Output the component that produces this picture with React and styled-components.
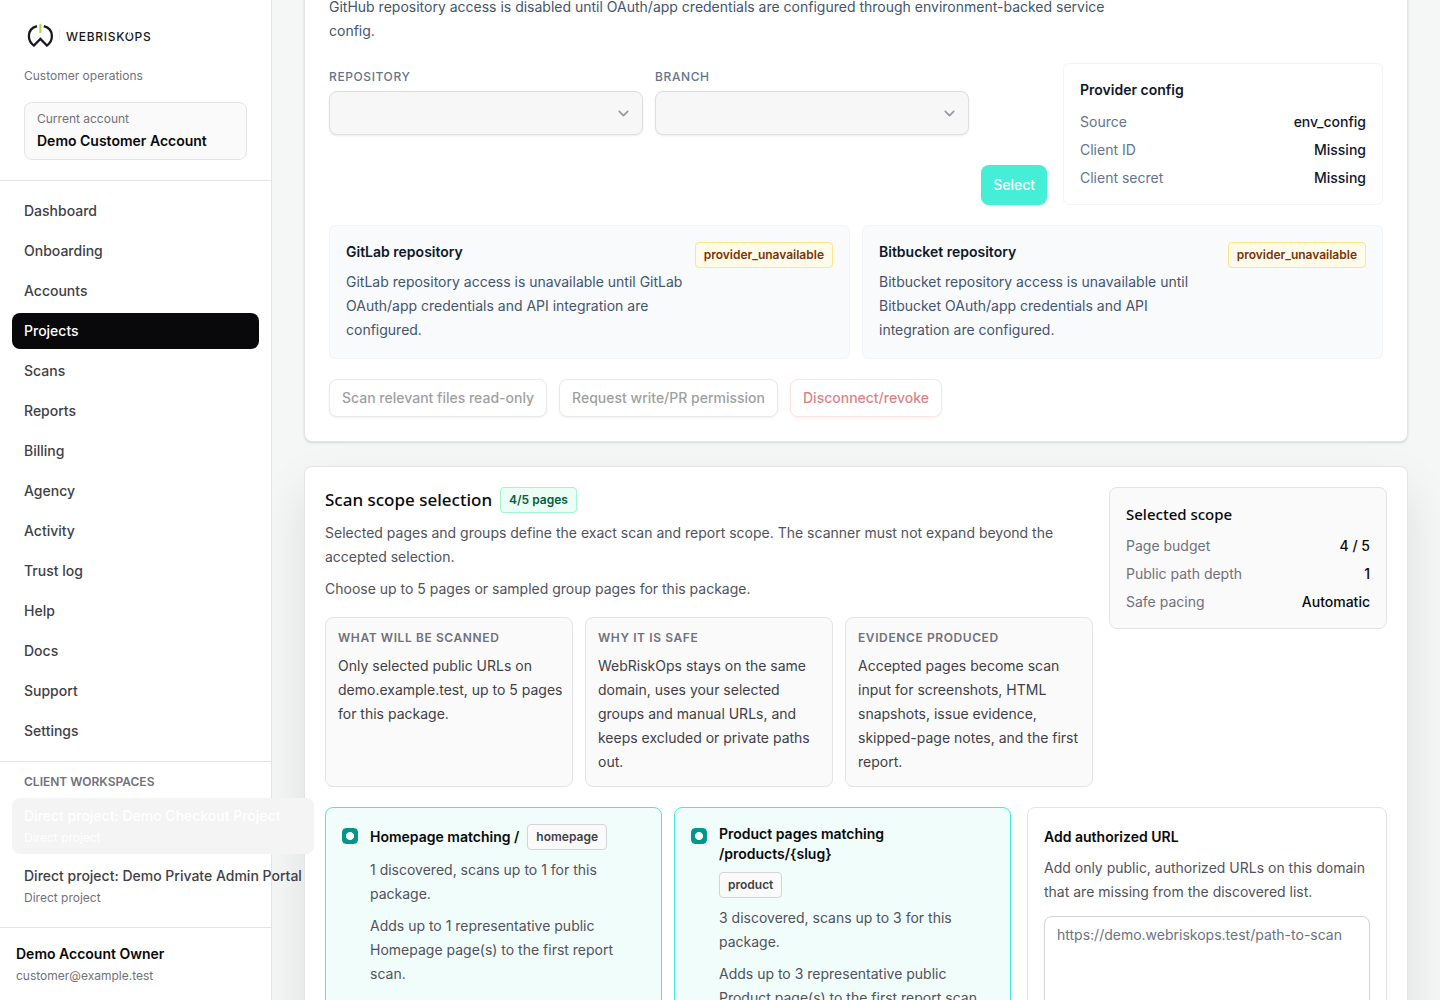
import React, { useState } from "react";
import styled, { createGlobalStyle, css } from "styled-components";

const GlobalStyle = createGlobalStyle`
  *,
  *::before,
  *::after {
    box-sizing: border-box;
  }

  body {
    margin: 0;
    background: #f5f7f7;
    color: #09090b;
    font-family: Inter, "Liberation Sans", sans-serif;
    font-size: 14px;
    line-height: 20px;
  }

  h2,
  h3,
  p,
  dl,
  dd {
    margin: 0;
  }

  button,
  input,
  select,
  textarea {
    font: inherit;
  }
`;

const Shell = styled.div`
  display: flex;
  height: 100vh;
  overflow: hidden;
`;

/* sidebar */

const Sidebar = styled.aside`
  position: relative;
  z-index: 1;
  flex: none;
  width: 272px;

  display: flex;
  flex-direction: column;

  background: white;
  border-right: 1px solid #e4e4e7;
`;

const Brand = styled.div`
  padding: 20px 24px;
  border-bottom: 1px solid #e4e4e7;
`;

const Logo = styled.svg`
  display: block;
  width: 128px;
  height: 32px;
`;

const Muted = styled.p`
  color: #71717b;
  font-size: 12px;
  line-height: 16px;
`;

const Tagline = styled(Muted)`
  margin-top: 16px;
`;

const Account = styled.div`
  margin-top: 18px;
  padding: 8px 12px;

  border: 1px solid #e4e4e7;
  border-radius: 8px;
  background: #fafafa;
`;

const Strong = styled.p`
  font-weight: 600;
`;

const AccountName = styled(Strong)`
  margin-top: 4px;
`;

const Nav = styled.nav`
  flex: 1;
  min-height: 0;

  display: flex;
  flex-direction: column;
`;

const NavList = styled.div`
  display: grid;
  gap: 4px;
  padding: 12px;
`;

const NavLink = styled.a`
  padding: 8px 12px;
  border-radius: 8px;
  color: ${({ $active }) => ($active ? "white" : "#3f3f46")};
  background: ${({ $active }) => ($active ? "#09090b" : "transparent")};
  font-weight: 500;
  text-decoration: none;
`;

const Workspaces = styled.div`
  padding: 12px;
  border-top: 1px solid #e4e4e7;
`;

const WorkspacesTitle = styled.h2`
  padding: 0 12px;
  margin-bottom: 8px;

  color: #71717b;
  font-size: 12px;
  font-weight: 600;
  line-height: 16px;
  text-transform: uppercase;
`;

const WorkspaceList = styled.div`
  display: grid;
  gap: 4px;
  width: max-content;
  min-width: 100%;
`;

const Workspace = styled.a`
  display: grid;
  gap: 4px;
  padding: 8px 12px;
  border-radius: 8px;

  color: #3f3f46;
  font-weight: 500;
  text-decoration: none;
  white-space: nowrap;

  && > small {
    color: #71717b;
    font-size: 12px;
    font-weight: 400;
    line-height: 16px;
  }

  ${({ $active }) =>
    $active &&
    css`
      background: #f4f4f4;

      &&,
      && > small {
        color: white;
      }
    `}
`;

const Owner = styled.div`
  display: grid;
  gap: 4px;
  padding: 16px;
  border-top: 1px solid #e4e4e7;
`;

/* content */

const Main = styled.main`
  flex: 1;
  min-width: 0;
  overflow: hidden;
`;

const Content = styled.div`
  display: grid;
  gap: 24px;
  padding: 0 32px 32px;
  margin-top: -30px;
`;

const Card = styled.section`
  padding: ${({ $raised }) => ($raised ? "20px" : "24px")};
  background: white;
  border: 1px solid #e4e4e7;
  border-radius: 8px;
  box-shadow: ${({ $raised }) =>
    $raised
      ? "0 24px 50px rgba(9, 9, 11, 0.1)"
      : "0 1px 3px rgba(0, 0, 0, 0.1), 0 1px 2px -1px rgba(0, 0, 0, 0.1)"};
`;

const Text = styled.p`
  color: ${({ $tone }) =>
    ({ slate: "#45556c", dark: "#3f3f46" })[$tone] || "#52525c"};
  line-height: 24px;
`;

const Intro = styled(Text)`
  max-width: 784px;
`;

const Split = styled.div`
  display: grid;
  grid-template-columns: minmax(0, 1fr) ${({ $side }) => $side}px;
  gap: 16px;
  margin-top: ${({ $top }) => $top || 0}px;
`;

const RepoForm = styled.form`
  display: grid;
  grid-template-columns: 1fr 1fr auto;
  gap: 12px;
`;

const Field = styled.label`
  color: #62748e;
  font-size: 12px;
  font-weight: 500;
  line-height: 28px;
  letter-spacing: 0.6px;
  text-transform: uppercase;
`;

const Select = styled.select`
  display: block;
  width: 100%;
  height: 44px;
  padding: 0 40px 0 12px;

  appearance: none;
  opacity: 1;
  color: #3f3f46;
  border: 1px solid #dedee0;
  border-radius: 8px;
  background: #f7f7f7
    url("data:image/svg+xml,%3Csvg xmlns='http://www.w3.org/2000/svg' viewBox='0 0 20 20' fill='none'%3E%3Cpath stroke='%23959ba7' stroke-linecap='round' stroke-linejoin='round' stroke-width='1.7' d='M6 8l4 4 4-4'/%3E%3C/svg%3E")
    no-repeat right 8px center / 21px 21px;
  box-shadow: 0 1px 2px rgba(0, 0, 0, 0.08);
`;

const SelectButton = styled.button`
  align-self: end;
  height: 40px;
  padding: 0 12px;

  color: white;
  background: #45efd7;
  border: 0;
  border-radius: 8px;
  box-shadow: 0 1px 2px rgba(0, 0, 0, 0.08);
  font-weight: 500;
`;

const Summary = styled.aside`
  align-self: start;
  padding: 16px;
  border: 1px solid ${({ $filled }) => ($filled ? "#e4e4e7" : "#f3f4f6")};
  border-radius: ${({ $filled }) => ($filled ? "8px" : "6px")};
  background: ${({ $filled }) => ($filled ? "#fafafa" : "white")};
  color: ${({ $filled }) => ($filled ? "#09090b" : "#0f172b")};

  dl {
    display: grid;
    gap: 8px;
    margin-top: 12px;
  }

  dl > div {
    display: flex;
    justify-content: space-between;
  }

  dt {
    color: ${({ $filled }) => ($filled ? "#71717b" : "#62748e")};
  }

  dd {
    font-weight: 500;
  }
`;

const Subtitle = styled.h3`
  font-size: 14px;
  font-weight: 600;
  line-height: 20px;
`;

const Title = styled.h2`
  font-family: "Noto Sans", sans-serif;
  font-size: 17px;
  font-weight: 500;
  line-height: 26px;
`;

const ScopeTitle = styled.h3`
  font-family: "Noto Sans", sans-serif;
  font-size: 15px;
  font-weight: 500;
  line-height: 20px;
`;

const Providers = styled.div`
  display: grid;
  grid-template-columns: 1fr 1fr;
  gap: 12px;
  margin-top: 20px;
`;

const Provider = styled.article`
  display: flex;
  justify-content: space-between;
  align-items: flex-start;
  gap: 12px;
  padding: 16px;

  color: #0f172b;
  background: #f8fafc;
  border: 1px solid #f1f5f9;
  border-radius: 6px;

  p {
    margin-top: 8px;
  }
`;

const badgeTones = {
  amber: ["#7b3306", "#fffbeb", "#fee685"],
  green: ["#006045", "#ecfdf5", "#a4f4cf"],
  gray: ["#3f3f46", "#fafafa", "#d4d4d8"],
};

const Badge = styled.span`
  flex: none;
  padding: 4px 8px;

  color: ${({ $tone }) => badgeTones[$tone][0]};
  background: ${({ $tone }) => badgeTones[$tone][1]};
  border: 1px solid ${({ $tone }) => badgeTones[$tone][2]};
  border-radius: 4px;
  font-size: 12px;
  font-weight: 600;
  line-height: 16px;
`;

const Actions = styled.div`
  display: flex;
  flex-wrap: wrap;
  gap: 12px;
  margin-top: 20px;
`;

const ActionButton = styled.button`
  height: 38px;
  padding: 0 12px;

  color: ${({ $danger }) => ($danger ? "#c10007" : "#3f3f46")};
  background: white;
  border: 1px solid ${({ $danger }) => ($danger ? "#ffc9c9" : "#d4d4d8")};
  border-radius: 8px;
  box-shadow: 0 1px 2px rgba(0, 0, 0, 0.1);
  font-weight: 500;
  opacity: 0.5;
`;

const TitleRow = styled.div`
  display: flex;
  flex-wrap: wrap;
  align-items: center;
  gap: 8px;
`;

const ScopeIntro = styled.div`
  display: grid;
  gap: 8px;
`;

const Facts = styled.div`
  display: grid;
  grid-template-columns: repeat(3, minmax(0, 1fr));
  gap: 12px;
  margin-top: 8px;
`;

const Fact = styled.div`
  padding: 12px 8px 12px 12px;
  border: 1px solid #e4e4e7;
  border-radius: 8px;
  background: #fafafa;

  h3 {
    margin-bottom: 8px;
    color: #71717b;
    font-size: 12px;
    font-weight: 600;
    line-height: 16px;
    letter-spacing: 0.6px;
    text-transform: uppercase;
  }
`;

const Groups = styled.div`
  display: grid;
  grid-template-columns: 1fr 1fr;
  gap: 12px;
`;

const Group = styled.label`
  display: flex;
  align-items: flex-start;
  gap: 12px;
  padding: 16px;

  border: 1px solid #46ecd5;
  border-radius: 8px;
  background: #f0fdfa;
`;

const GroupBody = styled.div`
  flex: 1;
  display: grid;
  gap: 8px;
`;

const GroupName = styled.span`
  font-weight: 600;
`;

const Check = styled.input`
  flex: none;
  width: 16px;
  height: 16px;
  margin: 4px 0 0;

  appearance: none;
  border: 1px solid #009689;
  border-radius: 4px;
  background: white;

  &:checked {
    background: radial-gradient(circle, white 3.6px, #009689 4.4px);
  }
`;

const UrlCard = styled.div`
  padding: 16px;
  border: 1px solid #e4e4e7;
  border-radius: 8px;

  p {
    margin-top: 6px;
  }
`;

const UrlLabel = styled.label`
  display: block;
  font-weight: 600;
  line-height: 26px;
`;

const UrlInput = styled.textarea`
  display: block;
  width: 100%;
  height: 128px;
  margin-top: 12px;
  padding: 8px 12px;

  resize: none;
  border: 1px solid #d4d4d8;
  border-radius: 8px;
  box-shadow: 0 1px 2px rgba(0, 0, 0, 0.06);

  &::placeholder {
    color: #6b7280;
  }
`;

const navItems = [
  "Dashboard",
  "Onboarding",
  "Accounts",
  "Projects",
  "Scans",
  "Reports",
  "Billing",
  "Agency",
  "Activity",
  "Trust log",
  "Help",
  "Docs",
  "Support",
  "Settings",
];

const providers = [
  {
    name: "GitLab repository",
    text: "GitLab repository access is unavailable until GitLab OAuth/app credentials and API integration are configured.",
  },
  {
    name: "Bitbucket repository",
    text: "Bitbucket repository access is unavailable until Bitbucket OAuth/app credentials and API integration are configured.",
  },
];

const facts = [
  {
    title: "What will be scanned",
    text: "Only selected public URLs on demo.example.test, up to 5 pages for this package.",
  },
  {
    title: "Why it is safe",
    text: "WebRiskOps stays on the same domain, uses your selected groups and manual URLs, and keeps excluded or private paths out.",
  },
  {
    title: "Evidence produced",
    text: "Accepted pages become scan input for screenshots, HTML snapshots, issue evidence, skipped-page notes, and the first report.",
  },
];

const groups = [
  {
    id: "homepage",
    name: "Homepage matching /",
    found: "1 discovered, scans up to 1 for this package.",
    adds: "Adds up to 1 representative public Homepage page(s) to the first report scan.",
  },
  {
    id: "product",
    name: "Product pages matching /products/{slug}",
    found: "3 discovered, scans up to 3 for this package.",
    adds: "Adds up to 3 representative public Product page(s) to the first report scan.",
  },
];

const BrandLogo = () => (
  <Logo viewBox="0 0 128 32" role="img" aria-label="WebRiskOps">
    <path
      d="M13 6.2C8 7.6 4.9 11.4 4.9 16c0 3.9 1.8 7.3 5 9.6l6.5-6.6 6.5 6.6c3.2-2.3 5-5.7 5-9.6 0-4.6-3.1-8.4-8.1-9.8"
      fill="none"
      stroke="#18181b"
      strokeWidth="2.3"
    />
    <path d="M16.4 3.8v9.2" stroke="#a3e635" strokeWidth="2.2" />
    <path d="M35.5 10v9" stroke="#e4e4e7" strokeWidth="0.7" />
    <text
      x="42"
      y="20.5"
      fill="#18181b"
      fontFamily="Inter, sans-serif"
      fontSize="12"
      fontWeight="500"
      letterSpacing="0.7"
    >
      WEBRISKOPS
    </text>
    <path d="M105.6 10.5v4.5" stroke="white" strokeWidth="3" />
    <path d="M105.6 12v4" stroke="#a3e635" strokeWidth="1" />
  </Logo>
);

const SummaryRows = ({ rows }) => (
  <dl>
    {rows.map(([label, value]) => (
      <div key={label}>
        <dt>{label}</dt>
        <dd>{value}</dd>
      </div>
    ))}
  </dl>
);

const SideNavigation = () => (
  <Sidebar>
    <Brand>
      <BrandLogo />
      <Tagline>Customer operations</Tagline>
      <Account>
        <Muted>Current account</Muted>
        <AccountName>Demo Customer Account</AccountName>
      </Account>
    </Brand>

    <Nav>
      <NavList>
        {navItems.map((item) => (
          <NavLink key={item} href="#" $active={item === "Projects"}>
            {item}
          </NavLink>
        ))}
      </NavList>

      <Workspaces>
        <WorkspacesTitle>Client workspaces</WorkspacesTitle>
        <WorkspaceList>
          <Workspace href="#" $active>
            Direct project: Demo Checkout Project
            <small>Direct project</small>
          </Workspace>
          <Workspace href="#">
            Direct project: Demo Private Admin Portal
            <small>Direct project</small>
          </Workspace>
        </WorkspaceList>
      </Workspaces>
    </Nav>

    <Owner>
      <Strong>Demo Account Owner</Strong>
      <Muted>customer@example.test</Muted>
    </Owner>
  </Sidebar>
);

const RepositoryAccess = () => (
  <Card>
    <Intro $tone="slate">
      GitHub repository access is disabled until OAuth/app credentials are
      configured through environment-backed service config.
    </Intro>

    <Split $side={320} $top={20}>
      <RepoForm onSubmit={(e) => e.preventDefault()}>
        <Field>
          Repository
          <Select disabled />
        </Field>
        <Field>
          Branch
          <Select disabled />
        </Field>
        <SelectButton disabled>Select</SelectButton>
      </RepoForm>

      <Summary>
        <Subtitle>Provider config</Subtitle>
        <SummaryRows
          rows={[
            ["Source", "env_config"],
            ["Client ID", "Missing"],
            ["Client secret", "Missing"],
          ]}
        />
      </Summary>
    </Split>

    <Providers>
      {providers.map(({ name, text }) => (
        <Provider key={name}>
          <div>
            <Subtitle>{name}</Subtitle>
            <Text $tone="slate">{text}</Text>
          </div>
          <Badge $tone="amber">provider_unavailable</Badge>
        </Provider>
      ))}
    </Providers>

    <Actions>
      <ActionButton disabled>Scan relevant files read-only</ActionButton>
      <ActionButton disabled>Request write/PR permission</ActionButton>
      <ActionButton disabled $danger>
        Disconnect/revoke
      </ActionButton>
    </Actions>
  </Card>
);

const ScanScope = () => {
  const [selected, setSelected] = useState(["homepage", "product"]);

  const toggle = (id) =>
    setSelected((state) =>
      state.includes(id) ? state.filter((x) => x !== id) : [...state, id]
    );

  return (
    <Card $raised>
      <Split $side={278}>
        <ScopeIntro>
          <TitleRow>
            <Title>Scan scope selection</Title>
            <Badge $tone="green">4/5 pages</Badge>
          </TitleRow>
          <Text>
            Selected pages and groups define the exact scan and report scope.
            The scanner must not expand beyond the accepted selection.
          </Text>
          <Text>
            Choose up to 5 pages or sampled group pages for this package.
          </Text>
          <Facts>
            {facts.map(({ title, text }) => (
              <Fact key={title}>
                <h3>{title}</h3>
                <Text $tone="dark">{text}</Text>
              </Fact>
            ))}
          </Facts>
        </ScopeIntro>

        <Summary $filled>
          <ScopeTitle>Selected scope</ScopeTitle>
          <SummaryRows
            rows={[
              ["Page budget", "4 / 5"],
              ["Public path depth", "1"],
              ["Safe pacing", "Automatic"],
            ]}
          />
        </Summary>
      </Split>

      <Split $side={360} $top={20}>
        <Groups>
          {groups.map(({ id, name, found, adds }) => (
            <Group key={id}>
              <Check
                type="checkbox"
                checked={selected.includes(id)}
                onChange={() => toggle(id)}
              />
              <GroupBody>
                <TitleRow>
                  <GroupName>{name}</GroupName>
                  <Badge $tone="gray">{id}</Badge>
                </TitleRow>
                <Text>{found}</Text>
                <Text>{adds}</Text>
              </GroupBody>
            </Group>
          ))}
        </Groups>

        <UrlCard>
          <UrlLabel htmlFor="manual-urls">Add authorized URL</UrlLabel>
          <Text>
            Add only public, authorized URLs on this domain that are missing
            from the discovered list.
          </Text>
          <UrlInput
            id="manual-urls"
            placeholder="https://demo.webriskops.test/path-to-scan"
          />
        </UrlCard>
      </Split>
    </Card>
  );
};

const App = () => (
  <>
    <GlobalStyle />
    <Shell>
      <SideNavigation />
      <Main>
        <Content>
          <RepositoryAccess />
          <ScanScope />
        </Content>
      </Main>
    </Shell>
  </>
);

export default App;
